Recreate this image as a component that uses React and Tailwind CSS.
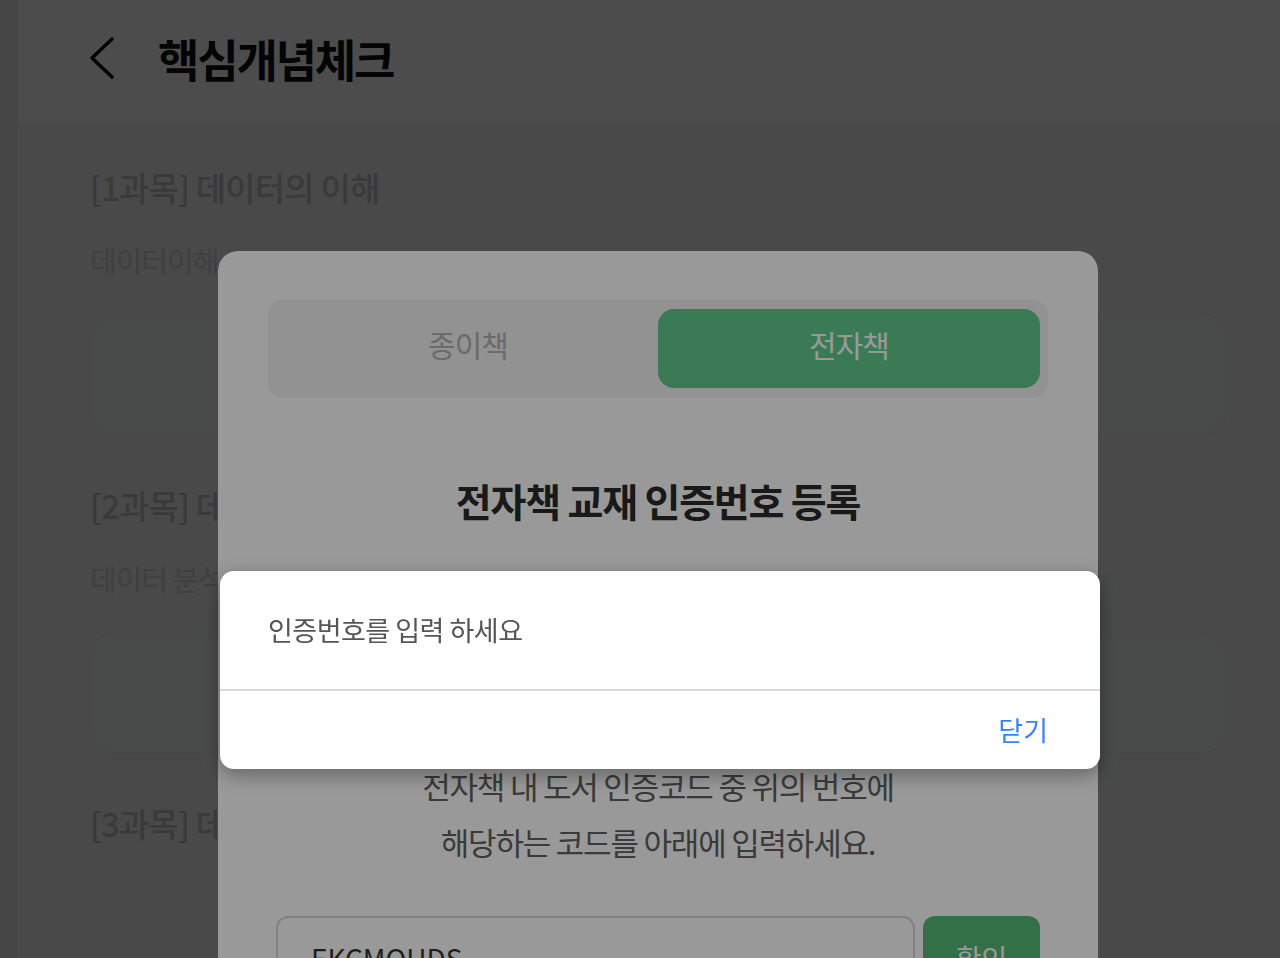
import { useState } from "react";

const font = { fontFamily: '"Noto Sans CJK KR", "Noto Sans", sans-serif' };

function Section({ title, sub }) {
  return (
    <div className="mb-[48px]">
      <h2 className="text-[33px] leading-[44px] font-medium text-[#c3c3c3] tracking-[-0.8px]">{title}</h2>
      {sub && (
        <>
          <p className="mt-[31px] text-[29px] leading-[40px] text-[#d6d6d6] tracking-[-1px]">{sub}</p>
          <div className="mt-[34px] h-[121px] rounded-[24px] border border-[#e9eaea] bg-[#f7f8f8]" />
        </>
      )}
    </div>
  );
}

export default function App() {
  const [tab, setTab] = useState("ebook");
  const [code, setCode] = useState("EKCMQUDS");
  const [alertOpen, setAlertOpen] = useState(true);

  return (
    <div className="relative h-[958px] overflow-hidden bg-white" style={font}>
      {/* page behind */}
      <div className="flex h-full">
        <div className="w-[18px] shrink-0 bg-[#ececec]" />
        <div className="flex-1 flex flex-col">
          <header className="h-[127px] shrink-0 flex items-center pl-[70px] pb-[10px] bg-white border-b border-[#f0f0f0]">
            <svg width="28" height="46" viewBox="0 0 28 46" fill="none">
              <path d="M24 4 L4 23 L24 42" stroke="#000" strokeWidth="3.5" strokeLinecap="round" strokeLinejoin="round" />
            </svg>
            <h1 className="ml-[42px] text-[45px] leading-none font-bold tracking-[-2.2px] text-[#111]">핵심개념체크</h1>
          </header>
          <main className="flex-1 bg-[#f4f6f9] pl-[72px] pr-[53px] pt-[38px]">
            <Section title="[1과목] 데이터의 이해" sub="데이터이해" />
            <Section title="[2과목] 데이터 분석 기획" sub="데이터 분석 기획" />
            <Section title="[3과목] 데이터 분석" />
          </main>
        </div>
      </div>

      {/* modal overlay */}
      <div className="fixed inset-0 bg-black/50">
        <div className="ml-[218px] mt-[251px] w-[880px] rounded-t-[20px] bg-white px-[50px] pt-[48px] pb-[40px]">
          <div className="flex rounded-2xl bg-[#f3f4f6] p-[10px] pr-[8px]">
            <button
              onClick={() => setTab("paper")}
              className={`w-[380px] h-[79px] pb-[8px] rounded-2xl text-[30px] tracking-[-1px] ${tab === "paper" ? "bg-[#62cb8e] text-white" : "text-[#b2b2b2]"}`}
            >
              종이책
            </button>
            <button
              onClick={() => setTab("ebook")}
              className={`flex-1 h-[79px] pb-[8px] rounded-2xl text-[30px] tracking-[-1px] ${tab === "ebook" ? "bg-[#62cb8e] text-white" : "text-[#b2b2b2]"}`}
            >
              전자책
            </button>
          </div>

          <h3 className="mt-[80px] text-center text-[39px] leading-[44px] font-bold tracking-[-1.2px] text-[#2a2a2a]">
            전자책 교재 인증번호 등록
          </h3>

          {/* area under the alert */}
          <div className="h-[236px]" />

          <p className="text-center text-[31px] leading-[56px] tracking-[-1.2px] text-[#616161]">
            전자책 내 도서 인증코드 중 위의 번호에
            <br />
            해당하는 코드를 아래에 입력하세요.
          </p>

          <div className="mt-[46px] px-[8px] flex gap-[8px]">
            <input
              value={code}
              onChange={(e) => setCode(e.target.value)}
              className="flex-1 h-[84px] rounded-xl border-2 border-[#d9d9d9] px-[33px] text-[28px] text-[#333] outline-none"
            />
            <button className="w-[117px] h-[84px] rounded-xl bg-[#55bb78] text-white text-[28px]">확인</button>
          </div>
        </div>
      </div>

      {/* alert overlay */}
      {alertOpen && (
        <div className="fixed inset-0 bg-black/40">
          <div className="ml-[220px] mt-[571px] w-[880px] rounded-[14px] bg-white shadow-[0_6px_20px_rgba(0,0,0,0.35)]">
            <div className="h-[118px] flex items-center pl-[48px] text-[27px] tracking-[-0.5px] text-[#555]">
              인증번호를 입력 하세요
            </div>
            <div className="h-[2px] bg-[#d9d9d9]" />
            <div className="h-[78px] flex items-center justify-end pr-[52px]">
              <button onClick={() => setAlertOpen(false)} className="text-[27px] text-[#3b82f6]">
                닫기
              </button>
            </div>
          </div>
        </div>
      )}
    </div>
  );
}
